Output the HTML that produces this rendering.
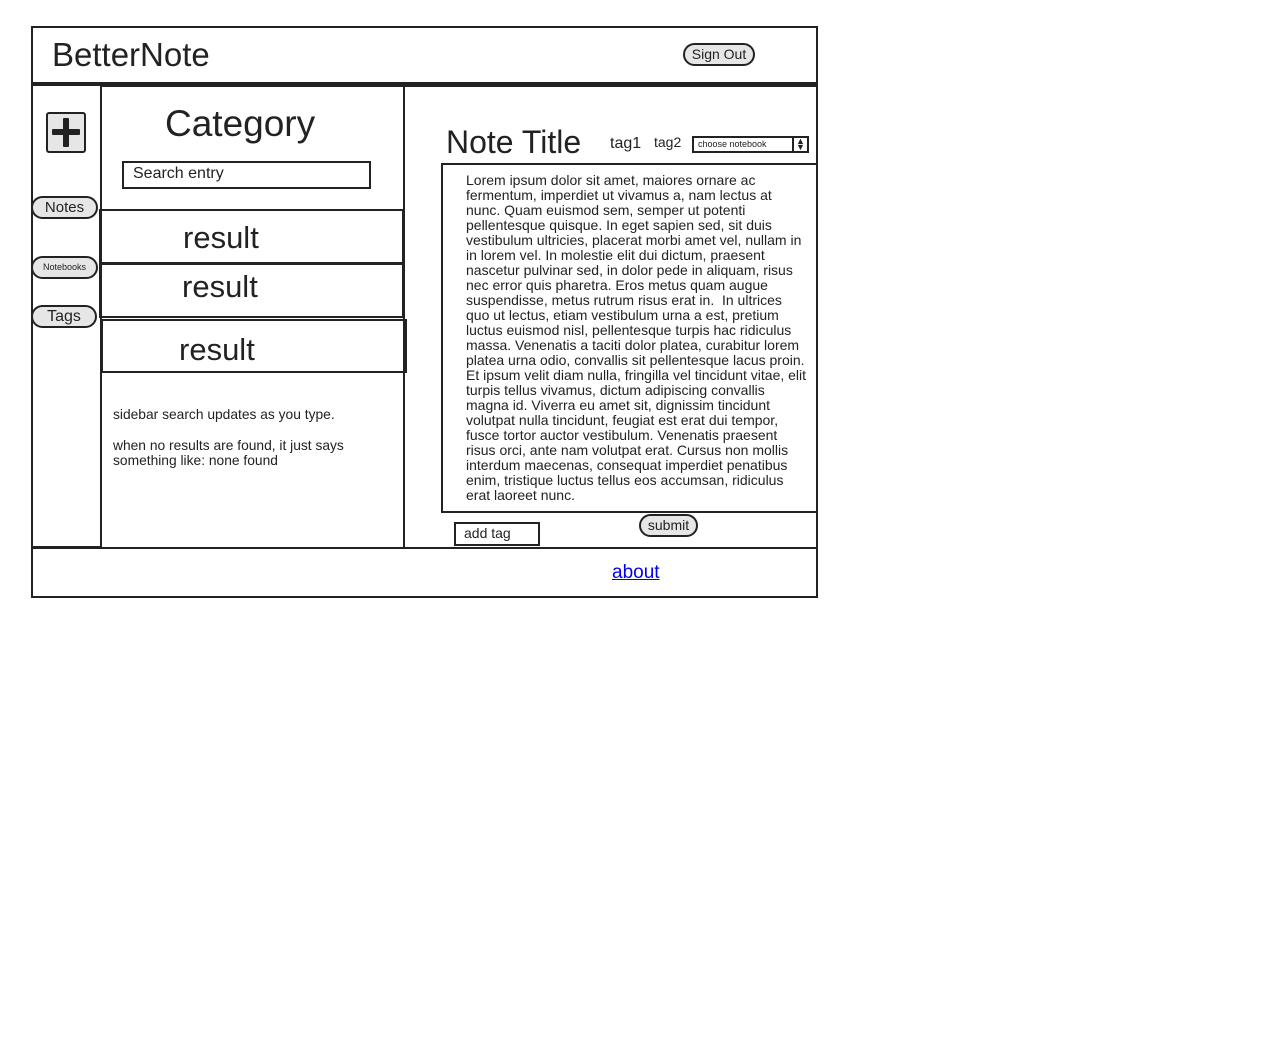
<!DOCTYPE html>
<html><head><meta charset="utf-8"><style>
body{margin:0;width:1279px;height:1038px;background:#fff;font-family:"Liberation Sans",Arial,sans-serif;color:#222;position:relative;overflow:hidden}
.a{position:absolute;box-sizing:border-box}
.b{border:2px solid #222}
.t{position:absolute;white-space:nowrap;line-height:1}
.btn{position:absolute;box-sizing:border-box;border:2px solid #222;border-radius:12px;background:#e6e6e6;text-align:center;white-space:nowrap}
</style></head><body>
<div class="a b" style="left:31px;top:26px;width:787px;height:59px;border-bottom-width:3px"></div>
<div class="t" style="left:52px;top:38px;font-size:33px">BetterNote</div>
<div class="btn" style="left:683px;top:43px;width:72px;height:23px;font-size:14px;line-height:19px">Sign Out</div>

<div class="a b" style="left:31px;top:84px;width:71px;height:464px"></div>
<div class="a b" style="left:100px;top:85px;width:305px;height:464px"></div>
<div class="a b" style="left:403px;top:85px;width:415px;height:464px"></div>

<div class="a b" style="left:46px;top:112px;width:40px;height:41px;border-radius:3px;background:#e6e6e6"></div>
<div class="a" style="left:52px;top:129px;width:28px;height:6px;background:#222;border-radius:1px"></div>
<div class="a" style="left:63px;top:118px;width:6px;height:29px;background:#222;border-radius:1px"></div>

<div class="btn" style="left:31px;top:196px;width:67px;height:23px;font-size:15px;line-height:19px">Notes</div>
<div class="btn" style="left:31px;top:256px;width:67px;height:23px;font-size:9px;line-height:19px">Notebooks</div>
<div class="btn" style="left:31px;top:305px;width:66px;height:23px;font-size:16px;line-height:20px">Tags</div>

<div class="t" style="left:165px;top:105px;font-size:37px">Category</div>
<div class="a b" style="left:122px;top:161px;width:249px;height:28px"></div>
<div class="t" style="left:133px;top:166px;font-size:16px">Search entry</div>

<div class="a b" style="left:99px;top:209px;width:305px;height:55px"></div>
<div class="t" style="left:183px;top:222px;font-size:31px">result</div>
<div class="a b" style="left:99px;top:263px;width:305px;height:55px"></div>
<div class="t" style="left:182px;top:271px;font-size:31px">result</div>
<div class="a b" style="left:101px;top:319px;width:306px;height:54px"></div>
<div class="t" style="left:179px;top:334px;font-size:31px">result</div>

<div class="t" style="left:113px;top:408px;font-size:13.8px">sidebar search updates as you type.</div>
<div class="t" style="left:113px;top:438px;font-size:13.8px;line-height:15px">when no results are found, it just says<br>something like: none found</div>

<div class="t" style="left:446px;top:126px;font-size:32px">Note Title</div>
<div class="t" style="left:610px;top:136px;font-size:16px">tag1</div>
<div class="t" style="left:654px;top:135px;font-size:14px">tag2</div>
<div class="a b" style="left:692px;top:136px;width:117px;height:17px"></div>
<div class="t" style="left:698px;top:140px;font-size:9px">choose notebook</div>
<div class="a" style="left:792px;top:137px;width:2px;height:15px;background:#222"></div>
<div class="t" style="left:796px;top:138px;font-size:9px;line-height:6px">▲<br>▼</div>

<div class="a b" style="left:441px;top:163px;width:377px;height:350px"></div>
<div class="t" style="left:466px;top:173px;font-size:14px;line-height:15px">Lorem ipsum dolor sit amet, maiores ornare ac<br>fermentum, imperdiet ut vivamus a, nam lectus at<br>nunc. Quam euismod sem, semper ut potenti<br>pellentesque quisque. In eget sapien sed, sit duis<br>vestibulum ultricies, placerat morbi amet vel, nullam in<br>in lorem vel. In molestie elit dui dictum, praesent<br>nascetur pulvinar sed, in dolor pede in aliquam, risus<br>nec error quis pharetra. Eros metus quam augue<br>suspendisse, metus rutrum risus erat in.&nbsp; In ultrices<br>quo ut lectus, etiam vestibulum urna a est, pretium<br>luctus euismod nisl, pellentesque turpis hac ridiculus<br>massa. Venenatis a taciti dolor platea, curabitur lorem<br>platea urna odio, convallis sit pellentesque lacus proin.<br>Et ipsum velit diam nulla, fringilla vel tincidunt vitae, elit<br>turpis tellus vivamus, dictum adipiscing convallis<br>magna id. Viverra eu amet sit, dignissim tincidunt<br>volutpat nulla tincidunt, feugiat est erat dui tempor,<br>fusce tortor auctor vestibulum. Venenatis praesent<br>risus orci, ante nam volutpat erat. Cursus non mollis<br>interdum maecenas, consequat imperdiet penatibus<br>enim, tristique luctus tellus eos accumsan, ridiculus<br>erat laoreet nunc.</div>

<div class="a b" style="left:454px;top:522px;width:86px;height:24px"></div>
<div class="t" style="left:464px;top:526px;font-size:14px">add tag</div>
<div class="btn" style="left:639px;top:514px;width:59px;height:23px;font-size:14px;line-height:18px">submit</div>

<div class="a b" style="left:31px;top:547px;width:787px;height:51px"></div>
<div class="t" style="left:612px;top:563px;font-size:19px;color:#00e;text-decoration:underline">about</div>
</body></html>
